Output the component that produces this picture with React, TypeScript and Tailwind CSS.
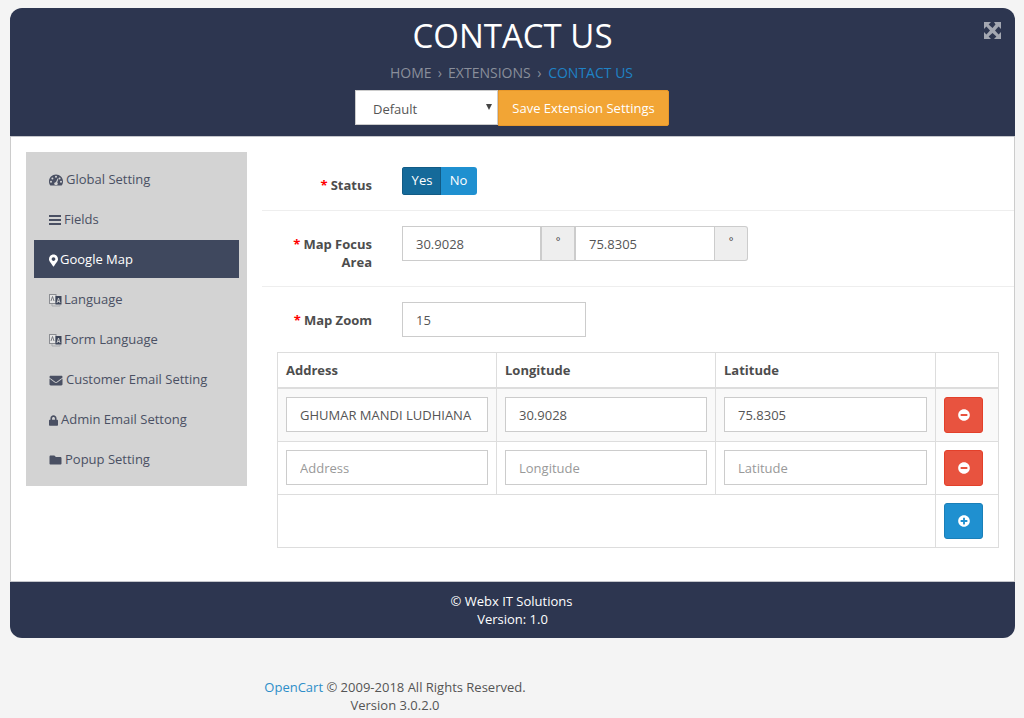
import { FaMapMarkerAlt, FaEnvelope, FaLock, FaFolder, FaMinusCircle, FaPlusCircle } from "react-icons/fa";

function Gauge() {
  return (
    <svg viewBox="0 0 14 12" className="w-[14px] h-[12px] mr-[3px]" fill="currentColor">
      <path
        fillRule="evenodd"
        d="M7 0.5C3.1 0.5 0 3.6 0 7.5c0 1.6.5 3 1.4 4h11.2c.9-1 1.4-2.4 1.4-4 0-3.9-3.1-7-7-7zM7 1.8a1 1 0 1 1 0 2 1 1 0 0 1 0-2zM3.4 3.4a1 1 0 1 1 0 2 1 1 0 0 1 0-2zM10.6 3.4a1 1 0 1 1 0 2 1 1 0 0 1 0-2zM2 6.8a1 1 0 1 1 0 2 1 1 0 0 1 0-2zM12 6.8a1 1 0 1 1 0 2 1 1 0 0 1 0-2zM8.6 4.4l.8.3-1.2 3.9c.4.3.6.7.6 1.1 0 .8-.8 1.4-1.8 1.4s-1.8-.6-1.8-1.4c0-.8.7-1.4 1.7-1.4z"
      />
    </svg>
  );
}

function Bars() {
  return (
    <svg viewBox="0 0 12 10" className="w-[12px] h-[10px] mr-[3px]" fill="currentColor">
      <rect x="0" y="0" width="12" height="2" />
      <rect x="0" y="4" width="12" height="2" />
      <rect x="0" y="8" width="12" height="2" />
    </svg>
  );
}

function Lang() {
  return (
    <svg viewBox="0 0 13 14" className="w-[13px] h-[14px] mr-[2px]">
      <rect x="0.5" y="1.5" width="6.5" height="9" fill="#e4e4e4" stroke="#8b8d92" strokeWidth="1" />
      <path d="M2 8l1.5-4.5L5 8" fill="none" stroke="#6d7078" strokeWidth="0.9" />
      <path d="M3 11v2h8v-1" fill="none" stroke="#a9abaf" strokeWidth="1" />
      <rect x="6.5" y="3" width="6" height="8.5" fill="#3d4559" />
      <path d="M8 10l1.5-5L11 10M8.5 8.5h2" fill="none" stroke="#d3d3d3" strokeWidth="0.9" />
    </svg>
  );
}

function Expand() {
  return (
    <svg viewBox="0 0 17 17" className="absolute right-[14px] top-[14px] w-[17px] h-[17px]" fill="#a3a7b1">
      <polygon points="0,0 7,0 4.6,2.4 8.5,6 11.5,2.4 10,0 17,0 17,7 14.6,4.6 11,8.5 14.6,12.4 17,10 17,17 10,17 12.4,14.6 8.5,11 4.6,14.6 7,17 0,17 0,10 2.4,12.4 6,8.5 2.4,4.6 0,7" />
    </svg>
  );
}

const nav = [
  { label: "Global Setting", icon: <Gauge /> },
  { label: "Fields", icon: <Bars /> },
  { label: "Google Map", icon: <FaMapMarkerAlt className="w-[9px] h-[13px] mr-[2px]" />, active: true },
  { label: "Language", icon: <Lang /> },
  { label: "Form Language", icon: <Lang /> },
  { label: "Customer Email Setting", icon: <FaEnvelope className="w-[14px] h-[13px] mr-[3px]" /> },
  { label: "Admin Email Settong", icon: <FaLock className="w-[9px] h-[11px] mr-[3px]" /> },
  { label: "Popup Setting", icon: <FaFolder className="w-[13px] h-[12px] mr-[3px]" /> },
];

const input = "h-[35px] border border-[#ccc] bg-white px-[13px] text-[13px] text-[#555] placeholder:text-[#999] outline-none min-w-0";

function Req({ children }: { children: React.ReactNode }) {
  return (
    <label className="block w-[110px] text-right text-[13px] leading-[18px] font-bold text-[#4d4d4d]">
      <span className="text-[#f00] mr-[3px]">*</span>
      {children}
    </label>
  );
}

function Row({ a, b, c, tint, ph }: { a?: string; b?: string; c?: string; tint?: boolean; ph?: boolean }) {
  const cell = "border-r border-b border-[#ddd] p-[8px] align-top";
  const field = input + " w-full pt-[2px]";
  return (
    <tr className={tint ? "bg-[#f9f9f9]" : "bg-white"}>
      <td className={cell}><input className={field} defaultValue={a} placeholder={ph ? "Address" : undefined} /></td>
      <td className={cell}><input className={field} defaultValue={b} placeholder={ph ? "Longitude" : undefined} /></td>
      <td className={cell}><input className={field} defaultValue={c} placeholder={ph ? "Latitude" : undefined} /></td>
      <td className="border-b border-[#ddd] p-[8px] align-top">
        <button className="w-[39px] h-[36px] flex items-center justify-center rounded-[3px] bg-[#e8533f] border border-[#e3402a] text-white">
          <FaMinusCircle className="w-[12px] h-[12px]" />
        </button>
      </td>
    </tr>
  );
}

export default function App() {
  return (
    <div className="min-h-[718px] bg-[#f4f4f4] pt-[8px] font-['Open_Sans',sans-serif] text-[13px] text-[#555]">
      <div className="ml-[10px] w-[1005px]">
        <header className="relative h-[129px] rounded-t-[12px] bg-[#2d3650] flex flex-col items-center border-b border-[#c4c6cb]">
          <h1 className="mt-[8px] text-[33px] leading-[40px] text-white font-normal">CONTACT US</h1>
          <div className="mt-[7px] mr-[2px] flex items-center text-[14px] leading-[20px] text-[#8a8f9b]">
            <span>HOME</span>
            <span className="w-[16.5px] text-center text-[14px]">›</span>
            <span>EXTENSIONS</span>
            <span className="w-[17.5px] text-center text-[14px]">›</span>
            <span className="text-[#1f82c5]">CONTACT US</span>
          </div>
          <div className="mt-[7px] ml-[1px] mr-[2px] flex items-start">
            <div className="relative w-[143px] h-[35px] bg-white border border-[#ccc] flex items-center pl-[17px] pt-[5px] text-[13px] text-[#555]">
              Default
              <span className="absolute right-[5px] top-[13px] w-0 h-0 border-l-[3px] border-r-[3px] border-t-[6px] border-l-transparent border-r-transparent border-t-[#444]" />
            </div>
            <button className="w-[171px] h-[36px] bg-[#f2a535] border border-[#e8982a] rounded-r-[2px] pt-[2px] text-white text-[13px]">
              Save Extension Settings
            </button>
          </div>
          <Expand />
        </header>

        <main className="h-[444px] bg-white border-x border-[#ccc] flex">
          <aside className="ml-[15px] mt-[15px] w-[221px] h-[334px] bg-[#d3d3d3] px-[8px] pt-[8px] shrink-0">
            {nav.map((n) => (
              <div
                key={n.label}
                className={
                  "h-[38px] mb-[2px] flex items-center pl-[15px] pt-[2px] text-[13px] " +
                  (n.active ? "bg-[#3f485e] text-white" : "text-[#4a5063]")
                }
              >
                {n.icon}
                {n.label}
              </div>
            ))}
          </aside>

          <section className="ml-[15px] flex-1 min-w-0">
            <div className="h-[74px] border-b border-[#eee] flex items-start">
              <div className="w-[110px] pt-[39px]"><Req>Status</Req></div>
              <div className="ml-[30px] mt-[30px] flex h-[28px] rounded-[3px] overflow-hidden text-white text-[13px]">
                <span className="w-[39px] pl-[1px] flex items-center justify-center bg-[#156a9a] border border-[#125b85]">Yes</span>
                <span className="w-[36px] pr-[1px] flex items-center justify-center bg-[#1f90d0]">No</span>
              </div>
            </div>
            <div className="h-[76px] border-b border-[#eee] flex items-start">
              <div className="w-[110px] pt-[24px]"><Req>Map Focus Area</Req></div>
              <div className="ml-[30px] mt-[15px] flex h-[35px]">
                <input className={input + " w-[139px]"} defaultValue="30.9028" />
                <span className="w-[34px] bg-[#eee] border border-[#ccc] flex justify-center pt-[6px] text-[11px] text-[#444]">°</span>
                <input className={input + " w-[140px]"} defaultValue="75.8305" />
                <span className="w-[33px] bg-[#eee] border border-[#ccc] border-l-0 rounded-r-[3px] flex justify-center pt-[6px] text-[11px] text-[#444]">°</span>
              </div>
            </div>
            <div className="flex items-start h-[65px]">
              <div className="w-[110px] pt-[24px]"><Req>Map Zoom</Req></div>
              <input className={input + " ml-[30px] mt-[15px] w-[184px]"} defaultValue="15" />
            </div>
            <table className="ml-[15px] w-[721px] border-collapse border border-[#ddd] table-fixed">
              <colgroup>
                <col className="w-[219px]" />
                <col className="w-[219px]" />
                <col className="w-[220px]" />
                <col className="w-[63px]" />
              </colgroup>
              <thead>
                <tr className="h-[35px] text-left font-bold text-[#4d4d4d]">
                  <th className="border-r border-b-2 border-[#ddd] px-[8px] pt-[2px]">Address</th>
                  <th className="border-r border-b-2 border-[#ddd] px-[8px] pt-[2px]">Longitude</th>
                  <th className="border-r border-b-2 border-[#ddd] px-[8px] pt-[2px]">Latitude</th>
                  <th className="border-b-2 border-[#ddd]"></th>
                </tr>
              </thead>
              <tbody>
                <Row a="GHUMAR MANDI LUDHIANA" b="30.9028" c="75.8305" tint />
                <Row ph />
                <tr>
                  <td colSpan={3} className="border-r border-[#ddd] h-[53px]"></td>
                  <td className="p-[8px] align-top">
                    <button className="w-[39px] h-[36px] flex items-center justify-center rounded-[3px] bg-[#1f90d0] border border-[#1a7fb8] text-white">
                      <FaPlusCircle className="w-[12px] h-[12px]" />
                    </button>
                  </td>
                </tr>
              </tbody>
            </table>
          </section>
        </main>

        <footer className="h-[57px] rounded-b-[12px] bg-[#2d3650] border-t border-[#c4c6cb] flex flex-col items-center pt-[10px] text-white text-[13px] leading-[18px]">
          <div className="mr-[2px]">© Webx IT Solutions</div>
          <div>Version: 1.0</div>
        </footer>
      </div>
      <div className="w-[790px] mt-[40px] text-center text-[13px] leading-[18px]">
        <div><span className="text-[#2d8ec9]">OpenCart</span> © 2009-2018 All Rights Reserved.</div>
        <div>Version 3.0.2.0</div>
      </div>
    </div>
  );
}
